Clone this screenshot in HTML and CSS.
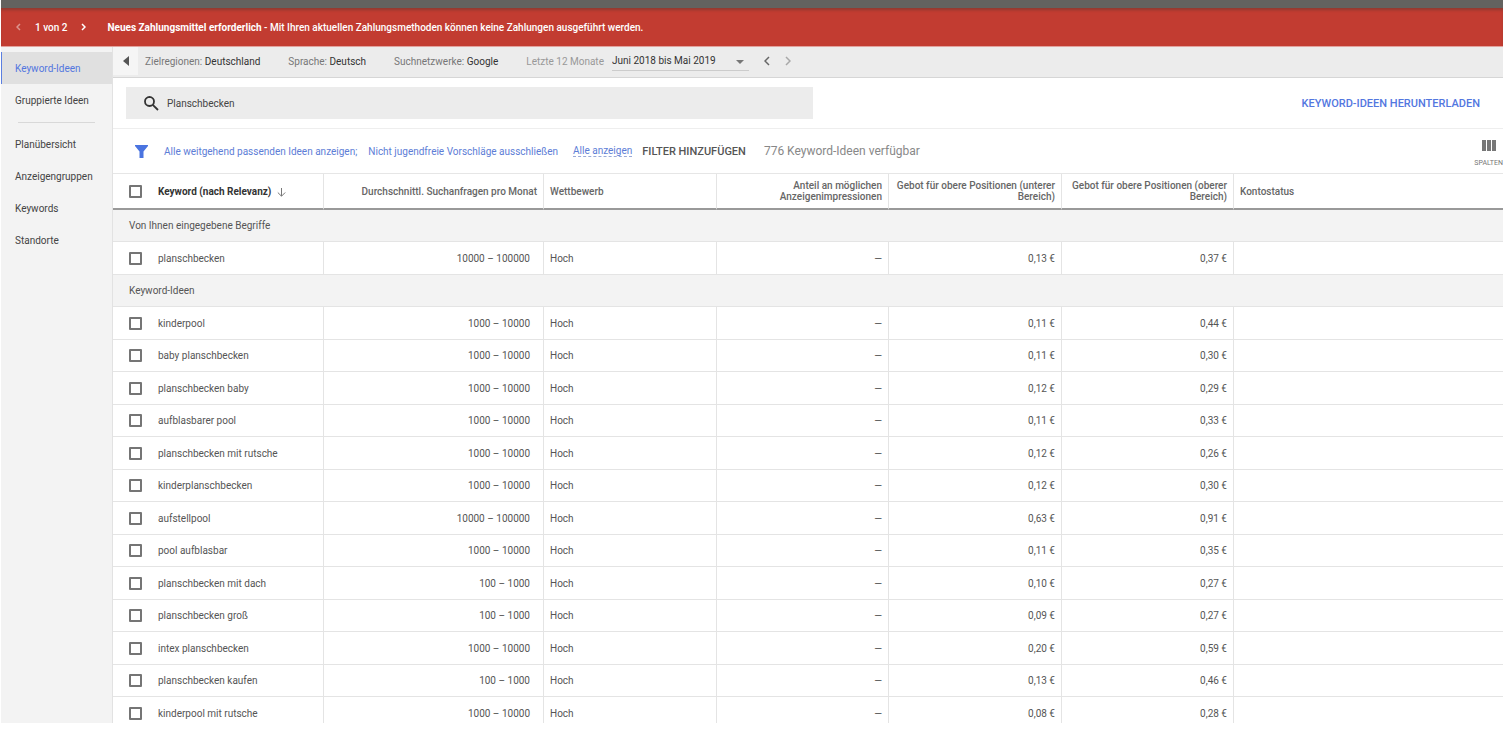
FILE: index.html
```
<!DOCTYPE html>
<html lang="de">
<head>
<meta charset="utf-8">
<title>Keyword-Ideen</title>
<link rel="stylesheet" href="styles.css">
</head>
<body>
<div class="app">
  <div class="topbar"></div>
  <div class="banner" role="alert">
    <button class="banner-nav banner-prev" aria-label="Vorherige Meldung" disabled><svg width="5" height="8" viewBox="0 0 5 8"><path d="M4 1 1 4l3 3"/></svg></button>
    <span class="banner-count">1 von 2</span>
    <button class="banner-nav" aria-label="Nächste Meldung"><svg width="5" height="8" viewBox="0 0 5 8"><path d="m1 1 3 3-3 3"/></svg></button>
    <p class="banner-text"><strong>Neues Zahlungsmittel erforderlich</strong> - Mit Ihren aktuellen Zahlungsmethoden können keine Zahlungen ausgeführt werden.</p>
  </div>
  <div class="body">
    <nav class="sidebar">
      <a class="nav-item active" href="#">Keyword-Ideen</a>
      <a class="nav-item" href="#">Gruppierte Ideen</a>
      <hr class="nav-divider">
      <a class="nav-item" href="#">Planübersicht</a>
      <a class="nav-item" href="#">Anzeigengruppen</a>
      <a class="nav-item" href="#">Keywords</a>
      <a class="nav-item" href="#">Standorte</a>
    </nav>
    <main class="main">
      <div class="context">
        <button class="collapse" aria-label="Navigation einklappen"><svg width="6" height="10" viewBox="0 0 6 10"><path d="M6 0v10L0 5z"/></svg></button>
        <span class="setting">Zielregionen: <b>Deutschland</b></span>
        <span class="setting">Sprache: <b>Deutsch</b></span>
        <span class="setting">Suchnetzwerke: <b>Google</b></span>
        <div class="period">
          <label class="period-label" for="period">Letzte 12 Monate</label>
          <div class="period-field">
            <select id="period" class="period-select"><option>Juni 2018 bis Mai 2019</option></select>
            <svg class="period-arrow" width="8" height="4" viewBox="0 0 8 4"><path d="M0 0h8L4 4z"/></svg>
          </div>
        </div>
        <button class="step" aria-label="Vorheriger Zeitraum"><svg width="6" height="10" viewBox="0 0 6 10"><path d="M5 1 1 5l4 4"/></svg></button>
        <button class="step" aria-label="Nächster Zeitraum" disabled><svg width="6" height="10" viewBox="0 0 6 10"><path d="m1 1 4 4-4 4"/></svg></button>
      </div>
      <div class="search-row">
        <div class="search-box">
          <svg width="15" height="15" viewBox="0 0 15 15"><circle cx="5.5" cy="5.5" r="4.500"/><path d="m8.800 8.800 5.200 5.200"/></svg>
          <input class="search-input" type="text" aria-label="Suchbegriff" value="Planschbecken">
        </div>
        <button class="download">KEYWORD-IDEEN HERUNTERLADEN</button>
      </div>
      <div class="filter-row">
        <svg class="funnel" width="13" height="13" viewBox="0 0 13 13"><path d="M0 0h13v1L8.500 6.500V13h-4V6.500L0 1z"/></svg>
        <a class="filter-link" href="#">Alle weitgehend passenden Ideen anzeigen;</a>
        <a class="filter-link" href="#">Nicht jugendfreie Vorschläge ausschließen</a>
        <a class="filter-link show-all" href="#">Alle anzeigen</a>
        <button class="add-filter">FILTER HINZUFÜGEN</button>
        <span class="result-count">776 Keyword-Ideen verfügbar</span>
        <button class="columns"><svg width="14" height="11" viewBox="0 0 14 11"><path d="M0 0h4v11H0zM5 0h4v11H5zM10 0h4v11h-4z"/></svg>SPALTEN</button>
      </div>
      <table class="ideas">
        <colgroup><col class="col-check"><col class="col-keyword"><col class="col-volume"><col class="col-competition"><col class="col-share"><col class="col-low"><col class="col-high"><col></colgroup>
        <thead>
          <tr>
            <th class="check"><input type="checkbox" aria-label="Alle auswählen"></th>
            <th class="keyword sorted">Keyword (nach Relevanz)<svg class="sort" width="9" height="9" viewBox="0 0 9 9"><path d="M4.500 0v8M.8 4.500l3.700 3.700 3.700-3.700"/></svg></th>
            <th class="num">Durchschnittl. Suchanfragen pro Monat</th>
            <th>Wettbewerb</th>
            <th class="num">Anteil an möglichen Anzeigenimpressionen</th>
            <th class="num">Gebot für obere Positionen (unterer Bereich)</th>
            <th class="num">Gebot für obere Positionen (oberer Bereich)</th>
            <th>Kontostatus</th>
          </tr>
        </thead>
        <tbody id="rows"></tbody>
      </table>
    </main>
  </div>
</div>
<script src="app.js"></script>
</body>
</html>
```
FILE: app.js
```
const sections = [
  { title: 'Von Ihnen eingegebene Begriffe', rows: [
    ['planschbecken', '10000 – 100000', '0,13 €', '0,37 €'],
  ] },
  { title: 'Keyword-Ideen', rows: [
    ['kinderpool', '1000 – 10000', '0,11 €', '0,44 €'],
    ['baby planschbecken', '1000 – 10000', '0,11 €', '0,30 €'],
    ['planschbecken baby', '1000 – 10000', '0,12 €', '0,29 €'],
    ['aufblasbarer pool', '1000 – 10000', '0,11 €', '0,33 €'],
    ['planschbecken mit rutsche', '1000 – 10000', '0,12 €', '0,26 €'],
    ['kinderplanschbecken', '1000 – 10000', '0,12 €', '0,30 €'],
    ['aufstellpool', '10000 – 100000', '0,63 €', '0,91 €'],
    ['pool aufblasbar', '1000 – 10000', '0,11 €', '0,35 €'],
    ['planschbecken mit dach', '100 – 1000', '0,10 €', '0,27 €'],
    ['planschbecken groß', '100 – 1000', '0,09 €', '0,27 €'],
    ['intex planschbecken', '1000 – 10000', '0,20 €', '0,59 €'],
    ['planschbecken kaufen', '100 – 1000', '0,13 €', '0,46 €'],
    ['kinderpool mit rutsche', '1000 – 10000', '0,08 €', '0,28 €'],
  ] },
];

document.getElementById('rows').innerHTML = sections.map(({ title, rows }) =>
  `<tr class="section"><td colspan="8">${title}</td></tr>` +
  rows.map(([keyword, volume, low, high]) => `<tr>
    <td class="check"><input type="checkbox" aria-label="${keyword}"></td>
    <td class="keyword">${keyword}</td>
    <td class="num volume">${volume}</td>
    <td>Hoch</td>
    <td class="num">—</td>
    <td class="num">${low}</td>
    <td class="num">${high}</td>
    <td></td>
  </tr>`).join('')
).join('');
```
FILE: styles.css
```
* { box-sizing: border-box; }
body { margin: 0; background: #fff; color: #555; font-family: Roboto, "Liberation Sans", sans-serif; font-size: 10px; }
button, input, select { font: inherit; color: inherit; margin: 0; padding: 0; border: 0; background: none; }
a { color: inherit; text-decoration: none; }
svg { display: block; flex: none; }

.app { display: flex; flex-direction: column; height: calc(100vh - 12px); padding-left: 1px; overflow: hidden; }
.topbar { flex: none; height: 8px; background: #63625f; }
.banner { flex: none; display: flex; align-items: center; height: 39px; padding-left: 15px; background: #c23c31; border-bottom: 1px solid #e2a29d; box-shadow: inset 0 3px 3px -1px #8e3a31; color: #fff; font-weight: 500; }
.banner-nav svg { fill: none; stroke: #fff; stroke-width: 1.500; }
.banner-prev { opacity: .45; }
.banner-count { margin: 0 14px; }
.banner-text { margin: 0 0 0 21px; }
.banner-text strong { font-weight: 700; }

.body { flex: 1; display: flex; min-height: 0; }
.sidebar { flex: none; width: 112px; padding-top: 5px; background: #f3f3f3; border-right: 1px solid #e2e2e2; color: #444; }
.nav-item { display: flex; align-items: center; height: 32px; padding-left: 14px; }
.nav-item.active { background: #e0e0e0; box-shadow: inset 1px 0 #5b7fe0; color: #5377df; }
.nav-divider { margin: 6px 17px 5px; border: 0; border-top: 1px solid #d8d8d8; }

.main { flex: 1; min-width: 0; }
.context { display: flex; align-items: center; height: 31px; padding-bottom: 2px; background: #ececec; border-bottom: 1px solid #d6d6d6; color: #777; }
.context b { font-weight: 400; color: #333; }
.collapse { width: 25px; height: 28px; padding-left: 10px; margin-right: 7px; background: #f5f5f5; fill: #555; }
.setting { margin-right: 28px; }
.period { display: flex; align-items: center; gap: 8px; }
.period-label { color: #999; }
.period-field { position: relative; border-bottom: 1px solid #ccc; }
.period-select { display: block; width: 137px; height: 18px; appearance: none; color: #333; }
.period-arrow { position: absolute; right: 5px; top: 8px; fill: #777; pointer-events: none; }
.step { margin-left: 15px; }
.step svg { fill: none; stroke: #666; stroke-width: 1.500; }
.step:disabled { opacity: .5; }

.search-row { display: flex; align-items: center; justify-content: space-between; gap: 24px; height: 51px; padding: 0 23px 0 13px; border-bottom: 1px solid #eee; }
.search-box { flex: 0 1 687px; display: flex; align-items: center; gap: 8px; height: 32px; padding-left: 18px; background: #ececec; }
.search-box svg { fill: none; stroke: #333; stroke-width: 1.800; }
.search-input { flex: 1; outline: 0; color: #444; }
.download { font-size: 11px; font-weight: 500; color: #5377df; }

.filter-row { display: flex; align-items: center; height: 45px; padding-left: 22px; border-bottom: 1px solid #e6e6e6; }
.funnel { margin-right: 16px; fill: #4a74e0; }
.filter-link { margin-right: 11px; color: #5d7dd6; }
.show-all { margin: 0 10px 0 4px; border-bottom: 1px dashed #9aa9d8; }
.add-filter { font-size: 11px; font-weight: 500; color: #555; }
.result-count { margin-left: 18px; font-size: 12px; color: #888; }
.columns { display: flex; flex-direction: column; align-items: center; gap: 8px; margin-left: auto; padding-top: 4px; font-size: 7px; line-height: 8px; color: #777; fill: #777; }

.ideas { width: 100%; table-layout: fixed; border-collapse: separate; border-spacing: 0; line-height: 11px; }
.col-check { width: 45px; }
.col-keyword { width: 166px; }
.col-volume { width: 220px; }
.col-competition, .col-low { width: 173px; }
.col-share, .col-high { width: 172px; }
.ideas th, .ideas td { padding: 0 6px; border-right: 1px solid #e4e4e4; text-align: left; vertical-align: middle; }
.ideas th:last-child, .ideas td:last-child { border-right: 0; }
.ideas th { height: 36px; border-bottom: 2px solid #999; font-weight: 500; color: #666; }
.ideas td { height: 32px; border-bottom: 1px solid #e4e4e4; }
.ideas tbody tr:nth-child(even) td { height: 33px; }
.ideas .section td { padding-left: 16px; background: #f3f3f3; }
.ideas .check { padding: 0 0 0 16px; border-right: 0; }
.ideas .keyword { padding-left: 0; }
.ideas .sorted { font-weight: 700; color: #333; }
.ideas .num { text-align: right; }
.ideas .volume { padding-right: 13px; }
.sort { display: inline-block; margin-left: 6px; vertical-align: -2px; fill: none; stroke: #777; }
.check input { display: block; appearance: none; width: 13px; height: 13px; border: 2px solid #757575; border-radius: 1px; background: #fff; }
```
